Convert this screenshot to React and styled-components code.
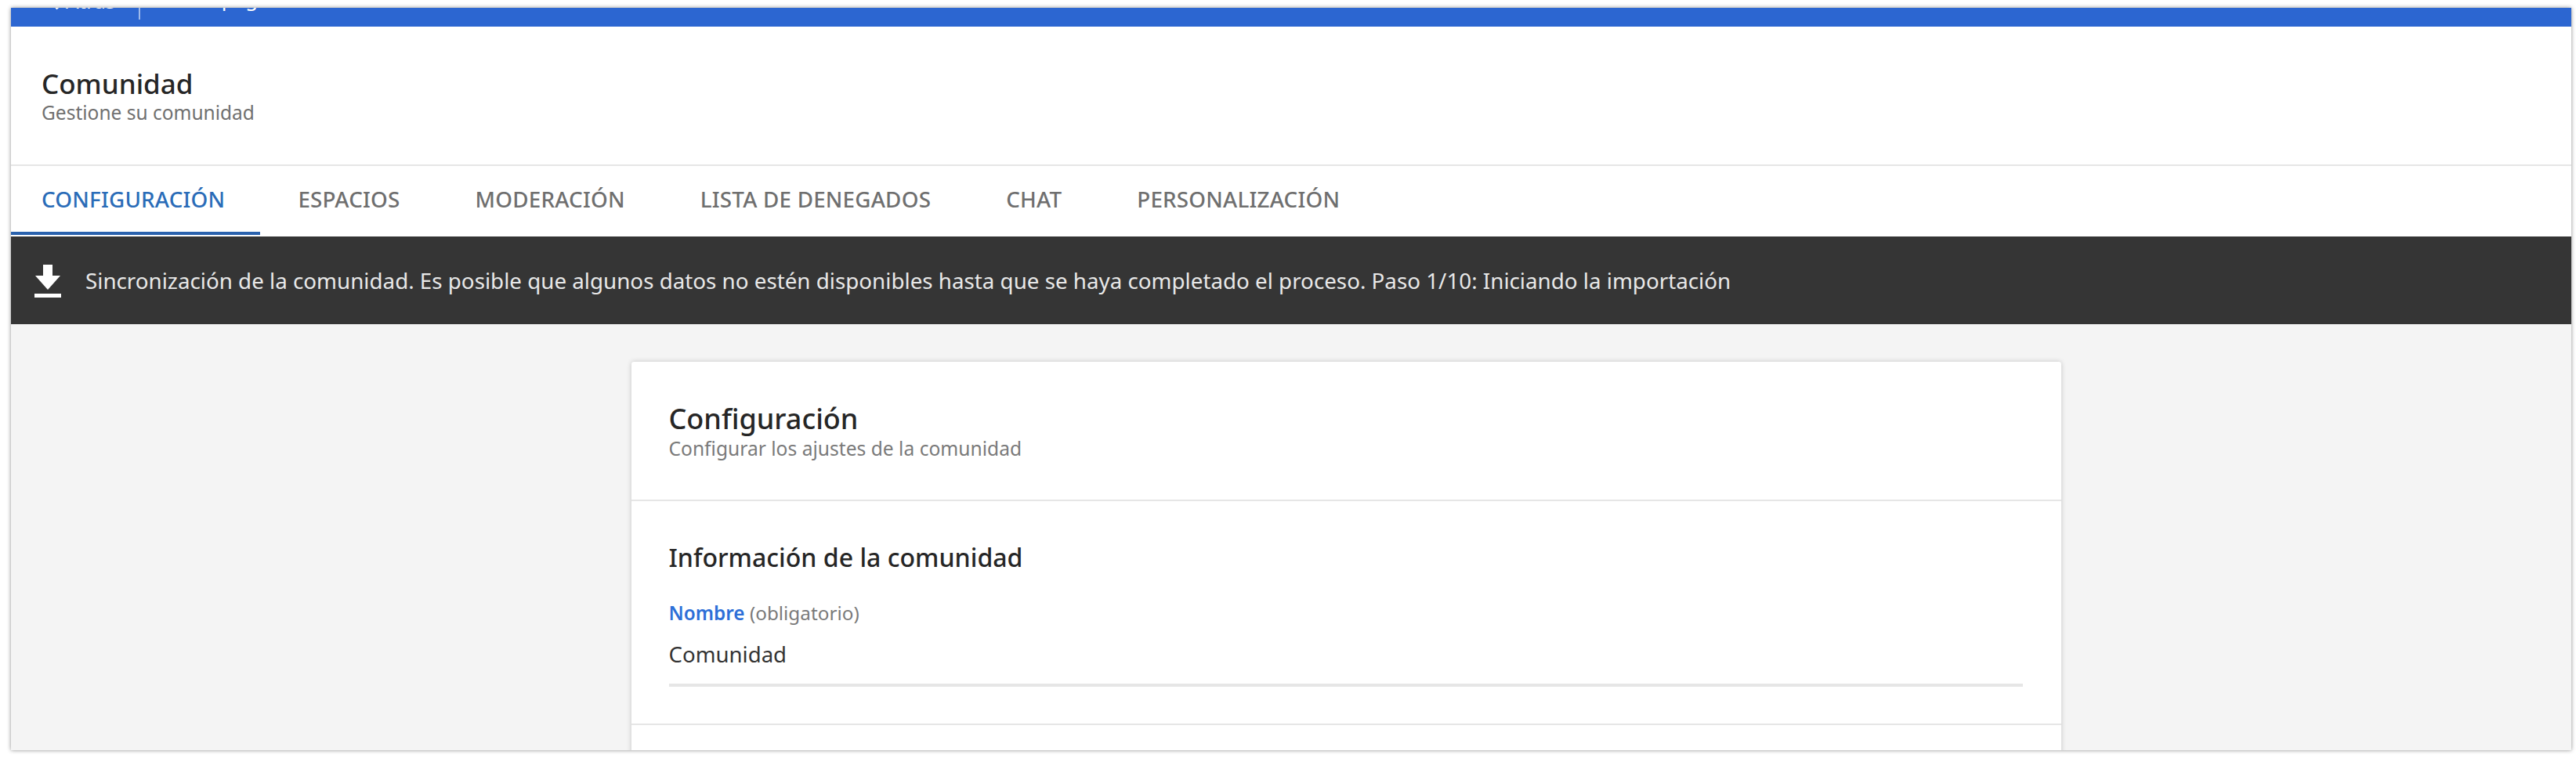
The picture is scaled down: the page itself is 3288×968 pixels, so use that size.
import React from "react";
import styled, { createGlobalStyle } from "styled-components";

const Global = createGlobalStyle`
  html, body { margin: 0; padding: 0; background: #fff; }
  body { font-family: "Noto Sans", "Open Sans", sans-serif; }
  * { box-sizing: border-box; }
`;
const Stage = styled.div`
  width: 3288px; height: 968px; padding: 10px 6px 10px 14px; overflow: hidden;
`;
const Win = styled.div`
  height: 948px; display: flex; flex-direction: column; overflow: hidden;
  background: #f4f4f4;
  box-shadow: 0 0 5px rgba(0,0,0,.45);
`;
const TopBar = styled.div`
  height: 24px; flex: none; background: #2c66d1; overflow: hidden; color: #fff;
  display: flex; align-items: flex-start; padding-left: 48px;
`;
const TopRow = styled.div`
  display: flex; align-items: flex-start; margin-top: -27px; height: 42px;
`;
const Back = styled.div`
  display: flex; align-items: center; gap: 8px; font-size: 26px; line-height: 36px; width: 115px;
`;
const Sep = styled.div`
  width: 2px; height: 42px; background: rgba(255,255,255,.55);
`;
const TopLink = styled.div`
  font-size: 26px; line-height: 36px; margin: -3px 0 0 28px; white-space: nowrap;
`;
const Header = styled.header`
  height: 178px; flex: none; background: #fff; border-bottom: 2px solid #e6e6e6;
  padding: 52px 38px 0 39px;
`;
const PageTitle = styled.h1`
  margin: 0; font-size: 35px; line-height: 42px; font-weight: 500; color: #262626;
`;
const PageSub = styled.p`
  margin: 0; font-size: 24.5px; line-height: 32px; color: #707070;
`;
const Tabs = styled.nav`
  height: 90px; flex: none; background: #fff; display: flex; padding-bottom: 2px;
`;
const Tab = styled.div`
  display: flex; align-items: center;
  padding: ${p => p.$first ? "0 45px 0 39px" : "0 48px"};
  font-size: 27.8px; font-weight: 500; letter-spacing: .2px; white-space: nowrap;
  color: ${p => p.$active ? "#2a6cb8" : "#6f6f6f"};
  border-bottom: 4px solid ${p => p.$active ? "#2a62ad" : "transparent"};
`;
const Banner = styled.div`
  height: 112px; flex: none; background: #353535; color: #e8e8e8;
  display: flex; align-items: center; padding-left: 30px; gap: 31px;
  font-size: 27.75px;
`;
const IconSlot = styled.span`
  display: flex; padding-top: 4px;
`;
const Body = styled.main`
  flex: 1; min-height: 0; display: flex; justify-content: center; padding: 48px 0 0 140px;
`;
const Card = styled.section`
  width: 1825px; height: 600px; background: #fff; border-radius: 3px 3px 0 0;
  box-shadow: 0 0 6px rgba(0,0,0,.2);
`;
const CardHead = styled.div`
  height: 178px; padding: 50px 49px 0 48px; border-bottom: 2px solid #e6e6e6;
`;
const CardTitle = styled.h2`
  margin: 0; font-size: 36px; line-height: 46px; font-weight: 500; color: #262626;
`;
const CardSub = styled.p`
  margin: 0; font-size: 24.6px; line-height: 30px; color: #7a7a7a;
`;
const Section = styled.div`
  height: 286px; padding: 51px 49px 0 48px; border-bottom: 2px solid #e6e6e6;
`;
const SectionTitle = styled.h3`
  margin: 0 0 35px; font-size: 32.1px; line-height: 42px; font-weight: 500; color: #262626;
`;
const FieldLabel = styled.label`
  display: block; font-size: 24.3px; line-height: 30px; color: #7a7a7a;
  b { color: #2d6fd8; font-weight: 600; }
`;
const FieldValue = styled.div`
  margin-top: 17px; height: 62px; font-size: 27.6px; line-height: 40px; color: #333;
  border-bottom: 4px solid #e6e6e6;
`;

const DownloadIcon = () => (
  <svg width="34" height="44" viewBox="0 0 34 44" fill="#fff" aria-hidden="true">
    <path d="M11 0h12v14h10L17 32 1 14h10z" />
    <rect x="0" y="37" width="34" height="5" />
  </svg>
);
const Chevron = () => (
  <svg width="14" height="24" viewBox="0 0 14 24" fill="none" stroke="#fff" strokeWidth="4" aria-hidden="true">
    <path d="M12 2 3 12l9 10" />
  </svg>
);

const tabs = ["CONFIGURACIÓN", "ESPACIOS", "MODERACIÓN", "LISTA DE DENEGADOS", "CHAT", "PERSONALIZACIÓN"];

export default function App() {
  return (
    <Stage>
      <Global />
      <Win>
        <TopBar>
          <TopRow>
            <Back><Chevron />Atrás</Back>
            <Sep />
            <TopLink>Ir a la página de la comunidad</TopLink>
          </TopRow>
        </TopBar>
        <Header>
          <PageTitle>Comunidad</PageTitle>
          <PageSub>Gestione su comunidad</PageSub>
        </Header>
        <Tabs>
          {tabs.map((t, i) => <Tab key={t} $first={i === 0} $active={i === 0}>{t}</Tab>)}
        </Tabs>
        <Banner>
          <IconSlot><DownloadIcon /></IconSlot>
          Sincronización de la comunidad. Es posible que algunos datos no estén disponibles hasta que se haya completado el proceso. Paso 1/10: Iniciando la importación
        </Banner>
        <Body>
          <Card>
            <CardHead>
              <CardTitle>Configuración</CardTitle>
              <CardSub>Configurar los ajustes de la comunidad</CardSub>
            </CardHead>
            <Section>
              <SectionTitle>Información de la comunidad</SectionTitle>
              <FieldLabel><b>Nombre</b> (obligatorio)</FieldLabel>
              <FieldValue>Comunidad</FieldValue>
            </Section>
          </Card>
        </Body>
      </Win>
    </Stage>
  );
}
